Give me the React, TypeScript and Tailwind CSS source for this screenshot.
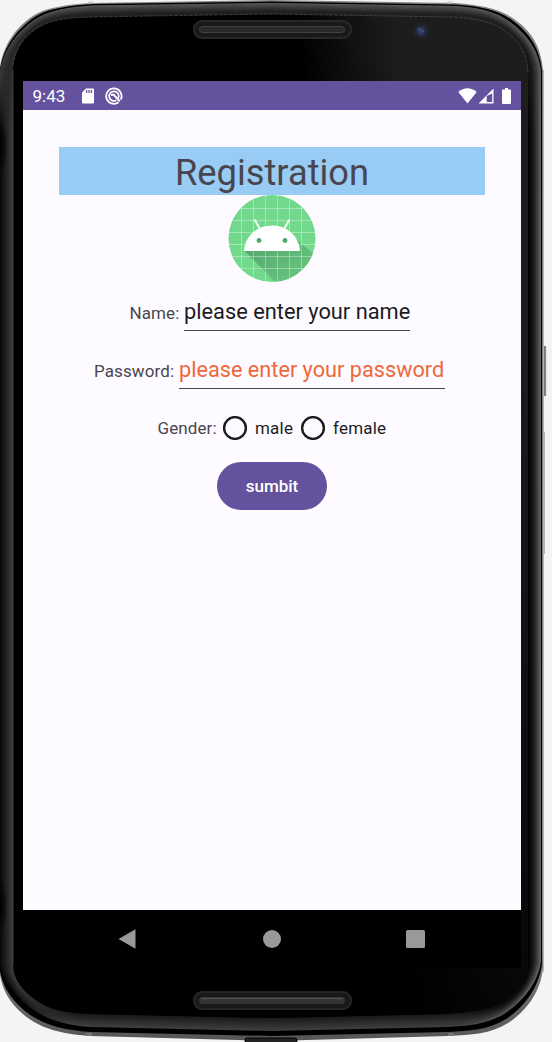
import React from "react";

const RIM =
  "M0 72C3 49 19 29 39 17C52 10 69 7 92 5.5L272 3L455 6C479 7.5 497 12 510 22C529 36 539 52 541 72L541 962C538 982 524 1001 504 1014C487 1024 470 1026 448 1027L272 1031L90 1027C62 1025 42 1018 27 1005C12 993 3 979 0 964Z";
const PANEL =
  "M13 66C15 49 24 36 39 27C52 20 64 18 90 17L272 14L450 17C477 18 493 22 505 31C521 43 527 54 528 72L528 964C526 981 516 996 500 1004C486 1011 470 1012 448 1014L272 1018L92 1014C63 1013 47 1009 33 998C20 988 14 978 13 966Z";

// Intermediate outline between the outer rim (t = 0) and the glass panel (t = 1).
function blend(t: number) {
  const target = (PANEL.match(/[\d.]+/g) ?? []).map(Number);
  let i = 0;
  return RIM.replace(/[\d.]+/g, (n) => {
    const from = Number(n);
    const to = target[i++];
    return (from + (to - from) * t).toFixed(2);
  });
}

const grey = (v: number) => `rgb(${Math.round(v)},${Math.round(v)},${Math.round(v)})`;
const LAYERS = Array.from({ length: 13 }, (_, i) => {
  const t = i / 12;
  return {
    path: blend(t),
    left: grey(10 + 54 * t),
    corner: grey(62 - 40 * t),
    right: grey(98 * Math.pow(1 - t, 1.6)),
    top: grey(88 - 55 * Math.min(1, t * 1.5)),
  };
});

function DeviceFrame() {
  const outer =
    "M0 68C3 45 16 26 36 14C50 7 65 5 90 3L272 0L455 3C482 5 500 9 514 19C534 33 541 49 543 70L543 968C541 990 528 1010 508 1023C490 1034 472 1035 448 1036L272 1041L90 1036C60 1034 40 1028 24 1015C9 1003 2 988 0 975Z";
  const dark =
    "M0 70C3 47 18 27 38 15C51 8 68 6 92 4L272 1.5L455 4.5C480 6 498 10 512 20C531 34 540 50 542 71L542 964C539 986 526 1006 506 1019C488 1030 470 1031 448 1032L272 1036L90 1032C61 1030 41 1024 25 1011C10 999 2 984 0 971Z";
  return (
    <svg
      className="pointer-events-none absolute inset-0 h-[1042px] w-[552px]"
      viewBox="0 0 552 1042"
      aria-hidden="true"
    >
      <defs>
        {LAYERS.map((layer, i) => (
          <React.Fragment key={i}>
            <linearGradient id={`side${i}`} gradientUnits="userSpaceOnUse" x1="0" x2="541" y1="0" y2="0">
              <stop offset="0" stopColor={layer.left} />
              <stop offset=".024" stopColor={layer.left} />
              <stop offset=".13" stopColor={layer.corner} />
              <stop offset=".85" stopColor={layer.corner} />
              <stop offset=".97" stopColor={layer.right} />
            </linearGradient>
            <linearGradient id={`cap${i}`} gradientUnits="userSpaceOnUse" x1="0" x2="0" y1="0" y2="130">
              <stop offset="0" stopColor={layer.top} />
              <stop offset=".25" stopColor={layer.top} />
              <stop offset="1" stopColor={layer.top} stopOpacity="0" />
            </linearGradient>
          </React.Fragment>
        ))}
        <linearGradient id="metal" x1="0" x2="0" y1="0" y2="1">
          <stop offset="0" stopColor="#858585" />
          <stop offset=".1" stopColor="#777" />
          <stop offset=".9" stopColor="#888" />
          <stop offset="1" stopColor="#555" />
        </linearGradient>
        <linearGradient id="panel" gradientUnits="userSpaceOnUse" x1="300" x2="400" y1="60" y2="48">
          <stop offset="0" stopColor="#000" />
          <stop offset=".55" stopColor="#111" />
          <stop offset="1" stopColor="#1d1d1d" />
        </linearGradient>
        <linearGradient id="shade" x1="0" x2="0" y1="0" y2="1">
          <stop offset=".3" stopColor="#000" stopOpacity="0" />
          <stop offset="1" stopColor="#000" stopOpacity=".8" />
        </linearGradient>
        <radialGradient id="notch">
          <stop offset="0" stopColor="#000" />
          <stop offset="1" stopColor="#000" stopOpacity="0" />
        </radialGradient>
        <radialGradient id="lens">
          <stop offset="0" stopColor="#3d4a78" />
          <stop offset=".5" stopColor="#252c49" />
          <stop offset=".75" stopColor="#202027" />
          <stop offset="1" stopColor="#242424" />
        </radialGradient>
      </defs>
      <path d="M542 346h4v50h-4zM542 432h2.500v122h-2.500z" fill="#777" />
      <path d="M546 347v50" stroke="#b8b8b8" strokeDasharray="1 1" />
      <path d="M543.500 70V972" stroke="#b5b5b5" />
      <path d={outer} fill="url(#metal)" />
      <path d={dark} fill="#000" />
      {LAYERS.map((layer, i) => (
        <React.Fragment key={i}>
          <path d={layer.path} fill={`url(#side${i})`} />
          <path d={layer.path} fill={`url(#cap${i})`} />
        </React.Fragment>
      ))}
      <ellipse cx="0" cy="147" rx="8" ry="30" fill="url(#notch)" />
      <ellipse cx="0" cy="906" rx="8" ry="30" fill="url(#notch)" />
      <path d={PANEL} fill="url(#panel)" />
      <path d={PANEL} fill="url(#shade)" />
      <path
        d="M13 66C15 49 24 36 39 27C52 20 64 18 90 17L272 14L450 17C477 18 493 22 505 31C521 43 527 54 528 72"
        fill="none"
        stroke="#555"
        strokeWidth=".6"
        strokeDasharray="4 1"
      />
      <path d="M13 70V966" stroke="#454545" strokeWidth=".8" />
      <path d="M88 2.500h6M447 2.500h6" stroke="#ccc" strokeWidth="2" />
      <path d="M86 1034.500h6M448 1034.500h6" stroke="#777" strokeWidth="3" />
      <rect x="245" y="1038" width="52" height="5" rx="2" fill="#222" stroke="#000" />
      <rect x="193" y="20" width="159" height="19" rx="9" fill="#282828" />
      <rect x="195" y="22" width="155" height="15" rx="7.500" fill="#191919" />
      <rect x="199.500" y="26.500" width="145" height="6" rx="3" fill="#292929" stroke="#414141" />
      <rect x="193" y="991" width="159" height="19" rx="9" fill="#252525" />
      <rect x="195" y="993" width="155" height="15" rx="7.500" fill="#191919" />
      <rect x="199" y="997" width="146" height="7" rx="3.500" fill="#343434" />
      <path d="M201 998.500H343" stroke="#555" />
      <circle cx="421" cy="31" r="8.500" fill="url(#lens)" />
      <circle cx="419" cy="29" r=".8" fill="#5669a0" />
      <circle cx="423" cy="31" r=".7" fill="#59648e" />
    </svg>
  );
}

function StatusBar() {
  return (
    <div className="flex h-[29px] items-center bg-[#64529e] pl-[9.5px] pr-2.5 text-[17px] text-white">
      <span className="w-[48px] pt-px leading-none">9:43</span>
      <svg className="h-4 w-[14px]" viewBox="0 0 14 16" fill="#fff">
        <path fillRule="evenodd" d="M5 .5h7q1 0 1 1v13q0 1-1 1H2q-1 0-1-1v-10zM5 2v3h1.300V2zm2.400 0v3h1.300V2zm2.400 0v3h1.300V2z" />
      </svg>
      <svg className="ml-[10.5px] h-[18px] w-[18px]" viewBox="0 0 18 18" fill="none" stroke="#fff">
        <path d="M13.5 15.300A7.700 7.700 0 1 1 15.800 12.500" strokeWidth="1.800" />
        <path d="M11.300 13.300A4.800 4.800 0 1 1 13.300 11.200" strokeWidth="1.700" />
        <path d="M6 8L8.500 7.500L14.800 14.300" strokeWidth="2" />
      </svg>
      <div className="ml-auto flex items-center">
        <svg className="h-4 w-[19px]" viewBox="0 0 19 16" fill="#fff">
          <path d="M.3 4Q9.500-3.500 18.700 4L9.500 15.500z" />
        </svg>
        <svg className="ml-[1px] h-4 w-4" viewBox="0 0 16 16" fill="#fff">
          <path fillRule="evenodd" d="M15.500.500v15H.500zM14.200 5.500L8.700 8V14H14.200z" />
        </svg>
        <svg className="ml-[8px] h-4 w-[9px]" viewBox="0 0 9 16" fill="#fff">
          <path d="M3 0h3v1.500h2q1 0 1 1V15q0 1-1 1H1q-1 0-1-1V2.500q0-1 1-1h2z" />
        </svg>
      </div>
    </div>
  );
}

function AndroidLogo() {
  return (
    <svg className="h-[87px] w-[88px]" viewBox="0 0 88 87">
      <defs>
        <clipPath id="disc"><circle cx="44" cy="43.500" r="43.500" /></clipPath>
        <linearGradient id="longShadow" x1="0" y1="0" x2="1" y2="1">
          <stop offset=".2" stopColor="#58ab70" />
          <stop offset="1" stopColor="#6acb83" />
        </linearGradient>
      </defs>
      <g clipPath="url(#disc)">
        <path d="M0 0h88v87H0z" fill="#72d98c" />
        <path d="M16 55.500L48 87.500H88V61L68 44z" fill="url(#longShadow)" />
        <path
          d="M13.500 0v87M25.500 0v87M37.500 0v87M49.500 0v87M61.500 0v87M73.500 0v87M0 13.500h88M0 25.500h88M0 37.500h88M0 49.500h88M0 61.500h88M0 73.500h88"
          stroke="#fff"
          strokeOpacity=".35"
        />
      </g>
      <path d="M16 56C17 41 29 30.500 44 30.500S71 41 72 56z" fill="#fff" />
      <path d="M26.500 24.500L32 34M61.500 24.500L56 34" stroke="#fff" strokeWidth="1.800" />
      <circle cx="31" cy="45.500" r="2.400" fill="#52a56a" />
      <circle cx="57" cy="45.500" r="2.400" fill="#52a56a" />
    </svg>
  );
}

function Field({ label, value, labelClass, valueClass }: {
  label: string;
  value: string;
  labelClass: string;
  valueClass: string;
}) {
  return (
    <label className="flex items-baseline whitespace-nowrap">
      <span className={labelClass}>{label}</span>
      <span className={valueClass}>{value}</span>
    </label>
  );
}

function RadioOption({ label, className }: { label: string; className: string }) {
  return (
    <button type="button" role="radio" aria-checked="false" className={className}>
      <svg className="mr-2 h-6 w-6 shrink-0" viewBox="0 0 24 24" fill="none" stroke="#1c1b1f" strokeWidth="2.4">
        <circle cx="12" cy="12" r="10.900" />
      </svg>
      <span className="pt-0.5">{label}</span>
    </button>
  );
}

function RegistrationForm() {
  return (
    <main className="flex h-[800px] flex-col items-center bg-[#fdfbff] pt-[37px] text-[17px] tracking-[0.1px] text-[#49454f]">
      <h1 className="h-12 w-[426px] bg-[#98ccf5] text-center text-[36.3px] leading-[51px] tracking-normal">
        Registration
      </h1>
      <AndroidLogo />
      <div className="flex w-full flex-col pt-[15px]">
        <Field
          label="Name:"
          value="please enter your name"
          labelClass="ml-[106.5px] w-[54.5px]"
          valueClass="h-[34px] w-[226px] border-b border-[#49454f] text-[21.8px] leading-[30px] tracking-normal text-[#1c1b1f]"
        />
        <div className="h-6" />
        <Field
          label="Password:"
          value="please enter your password"
          labelClass="ml-[71px] w-[85px]"
          valueClass="h-[34px] w-[266px] border-b border-[#49454f] text-[21.7px] leading-[30px] tracking-normal text-[#ee683b]"
        />
      </div>
      <div role="radiogroup" className="mt-[27px] flex h-6 w-full items-center pl-[134.5px]">
        <span className="w-[65.5px] pt-0.5">Gender:</span>
        <RadioOption label="male" className="flex w-[78px] items-center tracking-[0.2px] text-[#1c1b1f]" />
        <RadioOption label="female" className="flex items-center tracking-[0.2px] text-[#1c1b1f]" />
      </div>
      <button type="button" className="mt-[22px] h-12 w-[110px] rounded-full bg-[#64529e] pt-0.5 font-medium tracking-normal text-white">
        sumbit
      </button>
    </main>
  );
}

function NavigationBar() {
  return (
    <nav className="flex h-[58px] items-center bg-black pl-[94.5px]">
      <svg className="h-5 w-[18px]" viewBox="0 0 18 20"><path d="M.5 10L17.500 .2V19.800z" fill="#999" /></svg>
      <span className="ml-[127.5px] h-[18px] w-[18px] rounded-full bg-[#999]" />
      <span className="ml-[125px] h-[18px] w-[19px] rounded-[1.5px] bg-[#999]" />
    </nav>
  );
}

export default function App() {
  return (
    <div className="relative h-[1042px] w-[552px] overflow-hidden bg-[#f4f4f4] pl-[23px] pt-[81px] font-[Roboto,sans-serif]">
      <DeviceFrame />
      <div className="relative w-[498px]">
        <StatusBar />
        <RegistrationForm />
        <NavigationBar />
      </div>
    </div>
  );
}
